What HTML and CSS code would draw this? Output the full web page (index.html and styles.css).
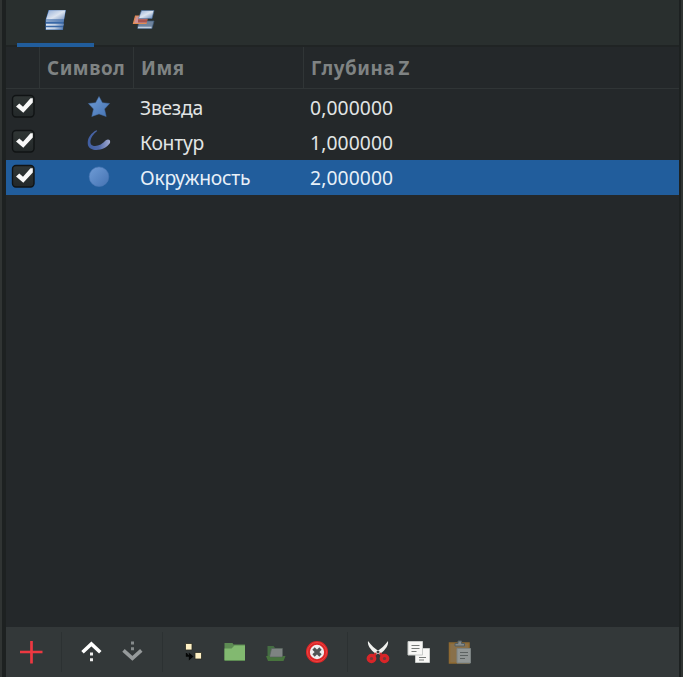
FILE: index.html
```html
<!DOCTYPE html>
<html lang="ru">
<head>
<meta charset="utf-8">
<title>Слои</title>
<link rel="stylesheet" href="styles.css">
</head>
<body>
<svg class="defs" width="0" height="0" aria-hidden="true">
  <defs>
    <linearGradient id="sheet" x1="0" y1="0" x2="1" y2="1"><stop offset="0" stop-color="#91acd6"/><stop offset=".5" stop-color="#dce4f0"/><stop offset="1" stop-color="#6486b8"/></linearGradient>
    <linearGradient id="edge" x1="0" y1="0" x2="1" y2="0"><stop offset="0" stop-color="#dce6f3"/><stop offset=".5" stop-color="#c3d0e2"/><stop offset="1" stop-color="#5d80b3"/></linearGradient>
    <linearGradient id="blue" x1="0" y1="0" x2="1" y2="1"><stop offset="0" stop-color="#6f9cd6"/><stop offset="1" stop-color="#4573b3"/></linearGradient>
    <linearGradient id="stroke" x1="0" y1="0" x2="1" y2="0"><stop offset="0" stop-color="#3f5da0"/><stop offset=".5" stop-color="#5069a8"/><stop offset="1" stop-color="#a5acd2"/></linearGradient>
    <linearGradient id="box" x1="0" y1="0" x2="0" y2="1"><stop offset="0" stop-color="#303635"/><stop offset="1" stop-color="#232829"/></linearGradient>
    <symbol id="check" viewBox="0 0 24 24">
      <rect x="1.500" y="1.500" width="21.500" height="21.500" rx="3.500" fill="url(#box)" stroke="#101314" stroke-width="1.400"/>
      <path d="M5 12.500 8.300 9.500 12 12.800 19.500 4.200h2.300v4.200L12.300 18.700Z" fill="#f8f8f8"/>
    </symbol>
  </defs>
</svg>
<div class="panel">
  <nav class="tabs">
    <div class="tab active">
      <svg width="24" height="24" viewBox="0 0 24 24"><path d="M1.500 22V12L4.500 2H22l-2 10-1 10z" fill="#3968a6"/><path d="M2 19.200h17l-.5 2.300H2z" fill="url(#edge)"/><path d="M2 15.700h18l-.6 2H2z" fill="url(#edge)"/><path d="M2 11.500 5 2.300H21.500l-1.500 9.200-.3 2H2z" fill="url(#sheet)"/><path d="M2 12h18" stroke="#3968a6" stroke-width="1.100"/></svg>
    </div>
    <div class="tab">
      <svg width="24" height="24" viewBox="0 0 24 24"><path d="M5.500 20.500 7 13h15l-2 7.500z" fill="#6e839d" stroke="#405b7c" stroke-width=".7"/><path d="M6 19.500h13.500" stroke="#c2cfdf" stroke-width="1.600"/><path d="M1.500 15.500 3.500 8H15.500l-1.500 7.500z" fill="#cf9294" stroke="#e38b52" stroke-width="1.200"/><path d="M6.500 10.500 9.500 2.500H22l-2 8z" fill="url(#sheet)" stroke="#496e9d" stroke-width=".6"/><path d="M6 11.200h9.500l-.8 3.300H6z" fill="#a85450"/></svg>
    </div>
  </nav>
  <div class="row head"><div></div><div>Символ</div><div>Имя</div><div>Глубина Z</div></div>
  <div class="rows">
    <div class="row"><div class="toggle"><svg width="24" height="24"><use href="#check"/></svg></div><div class="icon"><svg width="24" height="24" viewBox="0 0 24 24"><path d="m12 1.500 3.400 6.200 7.200.8-5.100 5.500 1.700 7.500L12 18.900l-7.200 2.600L6.500 14 1.400 8.500l7.200-.8z" fill="url(#blue)" stroke="#426ca6" stroke-width=".5"/></svg></div><div class="name">Звезда</div><div class="value">0,000000</div></div>
    <div class="row"><div class="toggle"><svg width="24" height="24"><use href="#check"/></svg></div><div class="icon"><svg width="24" height="24" viewBox="0 0 24 24"><path d="M9.500.3C3 3.500-.5 10 1.100 15.500 3.500 22.500 18 21 23 13 23.800 9.800 21.300 8.500 18.800 10.300 14.500 15.600 6.500 18 3.800 14 2.300 10.500 5 4.800 10.200 1Z" fill="url(#stroke)"/></svg></div><div class="name">Контур</div><div class="value">1,000000</div></div>
    <div class="row selected"><div class="toggle"><svg width="24" height="24"><use href="#check"/></svg></div><div class="icon"><svg width="24" height="24" viewBox="0 0 24 24"><circle cx="12" cy="11.700" r="9.800" fill="url(#blue)" stroke="#4a77b4" stroke-width=".6"/></svg></div><div class="name">Окружность</div><div class="value">2,000000</div></div>
  </div>
  <footer class="toolbar">
    <div class="tool"><svg width="24" height="24" viewBox="0 0 24 24"><path d="M12.500 1v22.500M1 12h22.500" stroke="#ed3841" stroke-width="2.700"/></svg></div>
    <div class="sep first"></div>
    <div class="tool"><svg width="24" height="24" viewBox="0 0 24 24"><path d="m3.500 12.300 8.900-8.400 8.900 8.400" fill="none" stroke="#fff" stroke-width="3.600"/><path d="M11 12.500h3v3h-3zm0 5.700h3v3h-3z" fill="#eee"/></svg></div>
    <div class="tool"><svg width="24" height="24" viewBox="0 0 24 24"><path d="m3.500 10.300 8.900 8 8.900-8" fill="none" stroke="#969a9b" stroke-width="3.600"/><path d="M11 1.500h3v3h-3zm0 5.700h3v3h-3z" fill="#858a8b"/></svg></div>
    <div class="sep second"></div>
    <div class="tool"><svg width="24" height="24" viewBox="0 0 24 24"><path d="M3.500 3.500H10V10H3.500zM13 12.500h6.500V19H13z" fill="#fff1c5" stroke="#2b2c22" stroke-width=".8"/><path d="M4.500 13v3h3M7.500 14l3 2.500-3 2.500z" fill="#050606" stroke="#050606" stroke-width="1.300"/></svg></div>
    <div class="tool"><svg width="24" height="24" viewBox="0 0 24 24"><path d="M1.500 3h8l1 1.500H22v16.500H1.500z" fill="#5d8b53"/><path d="M1.500 8.500h7l3-3H22v14.500H1.500z" fill="#82b970"/></svg></div>
    <div class="tool"><svg width="24" height="24" viewBox="0 0 24 24"><path d="M3.500 6h6L11 8h7v11H3.500z" fill="#456d43"/><path d="M7.500 8.500h11V17h-13z" fill="#7e8382" stroke="#596260" stroke-width=".7"/><path d="M2 16h4v1.500h12l1-1.500h2.500L19.500 21H4z" fill="#48743e"/></svg></div>
    <div class="tool"><svg width="24" height="24" viewBox="0 0 24 24"><circle cx="12" cy="12" r="9.100" fill="#eee" stroke="#db2526" stroke-width="3.900"/><circle cx="12" cy="12" r="9.500" fill="none" stroke="#f45552" stroke-width=".7"/><path d="m8.500 8.500 7 7m0-7-7 7" stroke="#505454" stroke-width="3.300"/></svg></div>
    <div class="sep third"></div>
    <div class="tool"><svg width="24" height="24" viewBox="0 0 24 24"><path d="M2 1c-.6 4 1.500 8 8.500 13.500l3.500-2.500C9 9 5 5 2 1M22 1c.6 4-1.500 8-8.500 13.500L10 12C15 9 19 5 22 1" fill="#f0f1ee"/><path d="m10 13-2 3m6-3 2 3" stroke="#c92b2c" stroke-width="2.500"/><ellipse cx="5.500" cy="18.500" rx="3.300" ry="3.100" fill="#75393b" stroke="#d92528" stroke-width="3.200"/><ellipse cx="18.500" cy="18.500" rx="3.300" ry="3.100" fill="#75393b" stroke="#d92528" stroke-width="3.200"/></svg></div>
    <div class="tool"><svg width="24" height="24" viewBox="0 0 24 24"><path d="M8.500 8.500h14v14h-14z" fill="#f7f7f5" stroke="#c7cac8"/><path d="M12 17.500h7m-7 2.500h5" stroke="#777b79"/><path d="M1 1.500h14.500v13.500H1z" fill="#f7f7f5" stroke="#c7cac8"/><path d="M4.500 5.500h8m-8 3h8m-8 3h5" stroke="#777b79" stroke-width="1.200"/></svg></div>
    <div class="tool"><svg width="24" height="24" viewBox="0 0 24 24"><path d="M1.500 3H21v20H1.500z" fill="#89704a" stroke="#8f6932" stroke-width="1.500"/><path d="M7 6V3.500h3V1h3.500v2.500h3V6z" fill="#858b8c" stroke="#555e60"/><path d="M9 8.500H22.500V23H9z" fill="#929796" stroke="#7b8282"/><path d="M12 12.500h8m-8 3h8m-8 3h5" stroke="#5c6261" stroke-width="1.200"/></svg></div>
  </footer>
</div>
</body>
</html>
```

FILE: styles.css
```css
* { box-sizing: border-box; }
body {
  margin: 0;
  height: 677px;
  overflow: hidden;
  background: #303433;
  color: #e2e5e5;
  font: 19.3px/35px "Noto Sans", sans-serif;
}
svg { display: block; flex: none; }
.defs { position: absolute; }
.panel {
  display: flex;
  flex-direction: column;
  width: 679px;
  height: 677px;
  margin-left: 2px;
  border: solid #1d2121;
  border-width: 0 2px 0 4px;
  background: #24282a;
}
.tabs {
  display: flex;
  gap: 11px;
  height: 47px;
  padding-left: 11px;
  border-bottom: 2px solid #202424;
  background: #292f2e;
}
.tab {
  width: 77px;
  height: 47px;
  padding: 8px 0 0 27px;
}
.tab.active { border-bottom: 4px solid #215d9c; }
.row {
  display: grid;
  grid-template-columns: 35px 94px 170px 1fr;
  height: 35px;
  white-space: nowrap;
}
.head {
  grid-template-columns: 34px 94px 170px 1fr;
  height: 42px;
  border-bottom: 1px solid #303536;
  color: #7f8383;
  font-size: 18.8px;
  font-weight: 700;
  letter-spacing: .55px;
  word-spacing: -2px;
  line-height: 42px;
}
.head > div { padding-left: 7px; border-right: 1px solid #303536; }
.head > div:last-child { border: 0; }
.rows { margin-top: 1px; }
.row.selected { background: #215d9c; color: #e8f0f8; }
.toggle { padding: 4px 0 0 5px; }
.icon { padding: 5px 0 0 46px; }
.name { padding-left: 5px; letter-spacing: -.25px; }
.value { padding-left: 5px; letter-spacing: .1px; }
.toolbar {
  display: flex;
  align-items: center;
  height: 50px;
  margin-top: auto;
  padding-left: 4px;
  background: #333839;
}
.tool {
  width: 41px;
  padding-left: 9px;
}
.sep {
  width: 20px;
  height: 40px;
  background: linear-gradient(#2c3132, #2c3132) 10px 0 / 1px 100% no-repeat;
}
.sep.first { width: 19px; }
.sep.second { width: 21px; }
```
